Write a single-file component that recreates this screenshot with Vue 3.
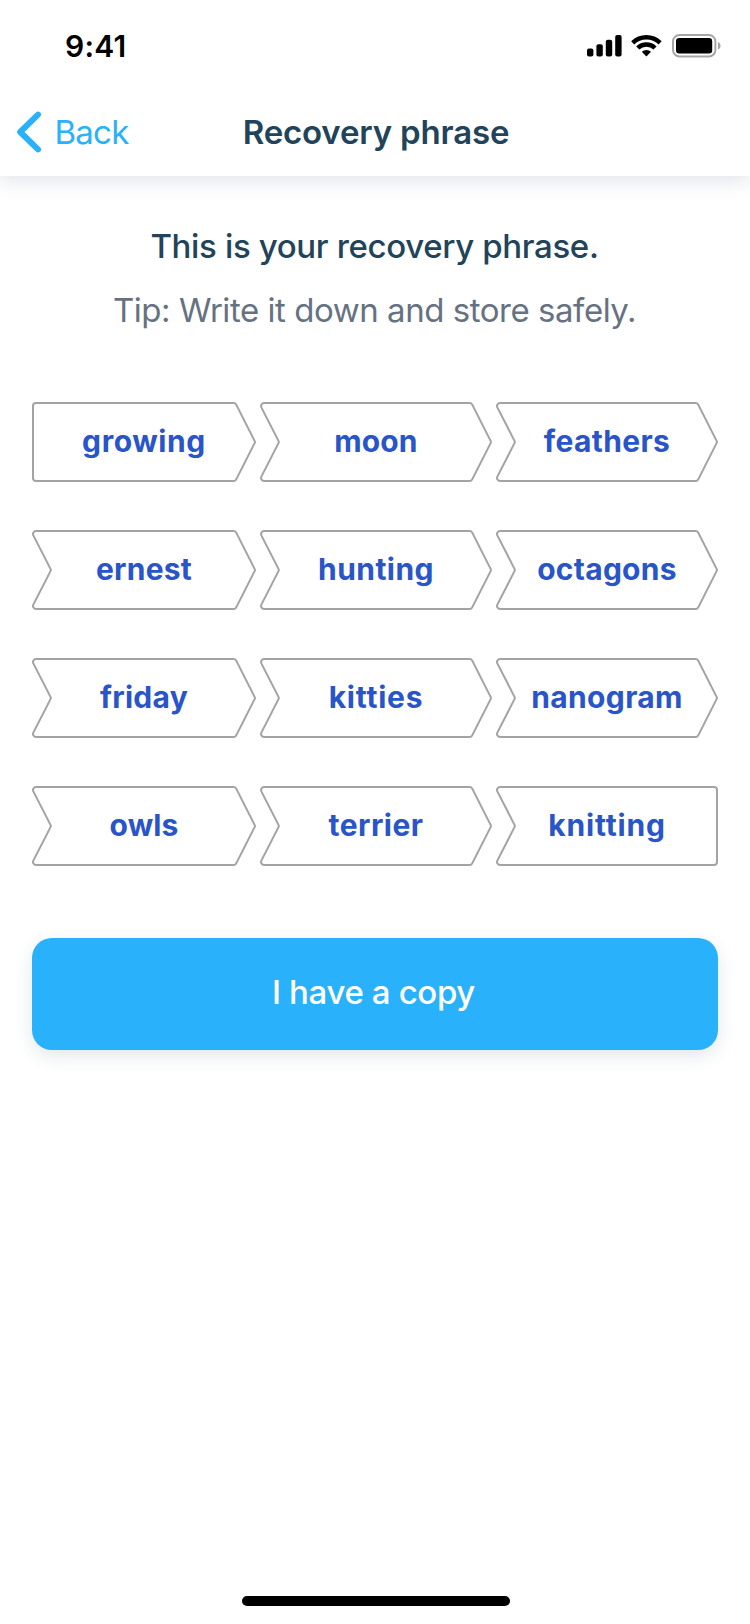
<script setup>
const words = [
  ['growing', 0.58], ['moon', 0.1], ['feathers', 0.38],
  ['ernest', 0.25], ['hunting', 0.45], ['octagons', 0.27],
  ['friday', 0.29], ['kitties', 0.78], ['nanogram', 0.37],
  ['owls', 0.1], ['terrier', 0.47], ['knitting', 0.85],
]
const columnWidths = [224, 232, 222]

// Closed outline through the given [x, y, radius] corners, each one rounded.
function roundedPath(points) {
  const n = points.length
  let d = ''
  points.forEach(([x, y, r], i) => {
    const [ax, ay] = points[(i + n - 1) % n]
    const [bx, by] = points[(i + 1) % n]
    const la = Math.hypot(ax - x, ay - y)
    const lb = Math.hypot(bx - x, by - y)
    const ux = (ax - x) / la, uy = (ay - y) / la
    const vx = (bx - x) / lb, vy = (by - y) / lb
    const t = r / Math.tan(Math.acos(ux * vx + uy * vy) / 2)
    const sweep = ux * vy - uy * vx < 0 ? 1 : 0
    const f = (v) => v.toFixed(2)
    d += `${i ? 'L' : 'M'}${f(x + ux * t)} ${f(y + uy * t)}A${r} ${r} 0 0 ${sweep} ${f(x + vx * t)} ${f(y + vy * t)}`
  })
  return d + 'Z'
}

const chips = words.map(([text, tracking], i) => {
  const w = columnWidths[i % 3]
  const left = i === 0
    ? [[1, 79, 3], [1, 1, 3]]
    : [[-0.9, 79, 3], [19.1, 40, 2], [-0.9, 1, 3]]
  const right = i === words.length - 1
    ? [[w - 1, 1, 3], [w - 1, 79, 3]]
    : [[w - 20.6, 1, 3], [w - 0.8, 40, 2], [w - 20.6, 79, 3]]
  return { text, tracking, w, path: roundedPath([...left, ...right]) }
})
</script>

<template>
  <div class="screen">
    <header class="header">
      <div class="status">
        <span class="time">9:41</span>
        <div class="indicators">
          <svg class="signal" width="35" height="23" viewBox="0 0 35 23">
            <rect x="0" y="14.5" width="6.4" height="8" rx="2" />
            <rect x="9.4" y="10.3" width="6.4" height="12.2" rx="2" />
            <rect x="18.8" y="5.7" width="6.4" height="16.8" rx="2" />
            <rect x="28.2" y="1" width="6.4" height="21.5" rx="2" />
          </svg>
          <svg class="wifi" width="31" height="23" viewBox="0 0 31 23">
            <path d="M1.7 8.9A19.4 19.4 0 0 1 29.1 8.9" fill="none" stroke="#000" stroke-width="4.4" />
            <path d="M6.8 14A12.2 12.2 0 0 1 24 14" fill="none" stroke="#000" stroke-width="4.4" />
            <path d="M10.8 17.8A6.6 6.6 0 0 1 20 17.8L15.9 22Q15.4 22.5 14.9 22Z" />
          </svg>
          <svg class="battery" width="50" height="24" viewBox="0 0 50 24">
            <rect x="1" y="1" width="42.4" height="21.4" rx="6.5" fill="none" stroke="#a6a6a6" stroke-width="2" />
            <rect x="4" y="4" width="36.2" height="15.4" rx="3.2" />
            <path d="M46 8C49.4 9.3 49.4 14.3 46 15.6Z" fill="#a6a6a6" />
          </svg>
        </div>
      </div>
      <nav class="nav">
        <a class="back">
          <svg class="chevron" width="26" height="42" viewBox="0 0 26 42">
            <path d="M22 3.6L4.2 21L22 38.4" fill="none" stroke="#29b1fb" stroke-width="6" stroke-linecap="round" stroke-linejoin="round" />
          </svg>
          <span class="back-label">Back</span>
        </a>
        <h1 class="title">Recovery phrase</h1>
      </nav>
    </header>

    <main class="content">
      <h2 class="heading">This is your recovery phrase.</h2>
      <p class="tip">Tip: Write it down and store safely.</p>
      <div class="phrase">
        <div v-for="chip in chips" :key="chip.text" class="chip">
          <svg class="outline" :width="chip.w" height="80" :viewBox="`0 0 ${chip.w} 80`">
            <path :d="chip.path" />
          </svg>
          <span class="word" :style="{ letterSpacing: chip.tracking + 'px' }">{{ chip.text }}</span>
        </div>
      </div>
      <button class="confirm" type="button">I have a copy</button>
    </main>

    <div class="home-bar"></div>
  </div>
</template>

<style>
body {
  margin: 0;
  background: #fff;
}
</style>

<style scoped>
.screen {
  box-sizing: border-box;
  width: 750px;
  height: 1624px;
  display: flex;
  flex-direction: column;
  overflow: hidden;
  background: #fff;
  font-family: Inter, "Liberation Sans", sans-serif;
}
.header {
  height: 176px;
  flex: none;
  background: #fff;
  box-shadow: 0 6px 18px rgba(34, 68, 90, 0.13);
}
.status {
  box-sizing: border-box;
  height: 88px;
  padding: 4px 28px 0 65px;
  display: flex;
  align-items: center;
  justify-content: space-between;
}
.time {
  font-size: 30px;
  font-weight: 600;
  line-height: 36px;
  letter-spacing: 0.2px;
}
.indicators {
  display: flex;
  align-items: flex-start;
}
.wifi {
  margin-left: 9px;
}
.battery {
  margin-left: 10px;
}
.nav {
  height: 88px;
  display: grid;
  grid-template-columns: 1fr auto 1fr;
  align-items: center;
  padding-left: 2px;
}
.back {
  display: flex;
  align-items: center;
  padding-left: 14px;
  color: #29b1fb;
}
.back-label {
  margin-left: 12.5px;
  font-size: 33px;
  line-height: 44px;
  letter-spacing: -0.75px;
}
.title {
  margin: 0;
  font-size: 33px;
  font-weight: 600;
  line-height: 44px;
  letter-spacing: -0.17px;
  color: #22445a;
}
.content {
  padding: 38px 32px 0;
  flex: 1;
}
.heading,
.tip {
  margin: 0;
  padding-right: 1px;
  text-align: center;
  font-size: 33px;
  line-height: 64px;
  white-space: nowrap;
}
.heading {
  font-weight: 500;
  letter-spacing: -0.35px;
  color: #22445a;
}
.tip {
  font-weight: 400;
  letter-spacing: -0.46px;
  color: #667282;
}
.phrase {
  margin-top: 60px;
  display: grid;
  grid-template-columns: 224px 232px 222px;
  column-gap: 4px;
  row-gap: 48px;
}
.chip {
  display: grid;
  height: 80px;
}
.outline,
.word {
  grid-area: 1 / 1;
}
.outline {
  display: block;
  overflow: visible;
  fill: none;
  stroke: #a3a3a3;
  stroke-width: 2;
}
.word {
  align-self: center;
  justify-self: center;
  padding-bottom: 2px;
  font-size: 30px;
  font-weight: 700;
  line-height: 36px;
  color: #2955c8;
}
.confirm {
  box-sizing: border-box;
  display: block;
  width: 686px;
  height: 112px;
  margin: 72px 0 0;
  padding: 0 3px 4px 0;
  border: 0;
  border-radius: 20px;
  background: #29b1fb;
  box-shadow: 0 6px 18px rgba(34, 68, 90, 0.13);
  font-family: inherit;
  font-size: 33px;
  font-weight: 500;
  letter-spacing: -0.36px;
  color: #fff;
}
.home-bar {
  width: 268px;
  height: 10px;
  margin: 0 auto 18px 242px;
  border-radius: 5px;
  background: #000;
}
</style>
